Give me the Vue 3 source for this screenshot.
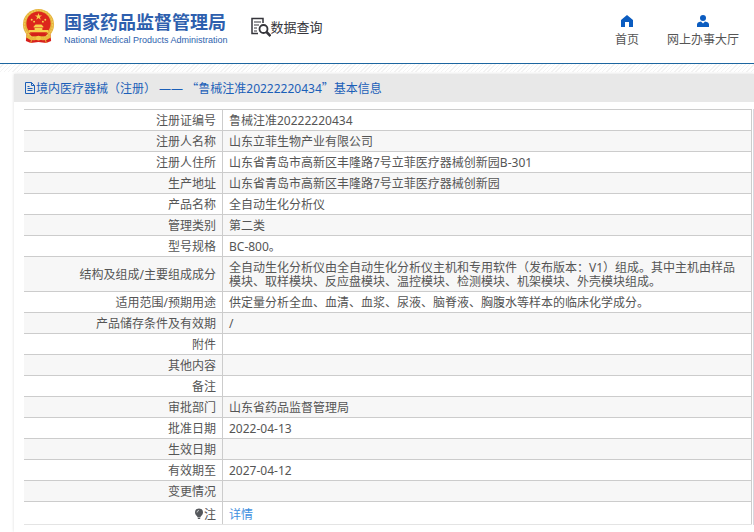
<script setup>
const rows = [
  ['注册证编号', '鲁械注准20222220434'],
  ['注册人名称', '山东立菲生物产业有限公司'],
  ['注册人住所', '山东省青岛市高新区丰隆路7号立菲医疗器械创新园B-301'],
  ['生产地址', '山东省青岛市高新区丰隆路7号立菲医疗器械创新园'],
  ['产品名称', '全自动生化分析仪'],
  ['管理类别', '第二类'],
  ['型号规格', 'BC-800。'],
  ['结构及组成/主要组成成分', '全自动生化分析仪由全自动生化分析仪主机和专用软件（发布版本：V1）组成。其中主机由样品模块、取样模块、反应盘模块、温控模块、检测模块、机架模块、外壳模块组成。'],
  ['适用范围/预期用途', '供定量分析全血、血清、血浆、尿液、脑脊液、胸腹水等样本的临床化学成分。'],
  ['产品储存条件及有效期', '/'],
  ['附件', ''],
  ['其他内容', ''],
  ['备注', ''],
  ['审批部门', '山东省药品监督管理局'],
  ['批准日期', '2022-04-13'],
  ['生效日期', ''],
  ['有效期至', '2027-04-12'],
  ['变更情况', '']
]
</script>

<template>
  <div class="page">
    <header class="header">
      <a class="brand" href="#">
        <svg class="emblem" viewBox="0 0 34 36" aria-hidden="true">
          <path d="M5 23 4 33l5 2 8-1 8 1 5-2-1-10z" fill="#d8201c" />
          <circle cx="17" cy="16" r="16" fill="#e5b23a" />
          <circle cx="17" cy="16" r="14.500" fill="none" stroke="#f0c858" stroke-width="1.500" stroke-dasharray="2 1" />
          <circle cx="17" cy="15" r="12.500" fill="#dc251c" />
          <path d="m17 4 .9 2.700h2.800l-2.300 1.600.9 2.700-2.300-1.700-2.300 1.700.9-2.700-2.300-1.600h2.800z" fill="#f7d04c" />
          <g fill="#f7d04c">
            <circle cx="10" cy="11" r="1" /><circle cx="12.500" cy="13" r="1" />
            <circle cx="21.500" cy="13" r="1" /><circle cx="24" cy="11" r="1" />
            <path d="M12 18l2-2h6l2 2v1H12zM13 19.500h8v2h6v2.500H7v-2.500h6z" />
          </g>
          <path d="M7 25h20l-3 3H10z" fill="#d3201a" />
          <path d="M5 26q5 5 9 3 3-2 6 0 4 2 9-3l1 3q-5 4-10 3-3-2-6 0-5 1-10-3z" fill="#e9b93b" />
          <circle cx="17" cy="30" r="2.500" fill="#f2c849" />
          <path d="m10 31-1 4m15-4 1 4" stroke="#e9b93b" stroke-width="1" />
        </svg>
        <span class="brand-text">
          <span class="brand-cn">国家药品监督管理局</span>
          <span class="brand-en">National Medical Products Administration</span>
        </span>
      </a>
      <div class="section">
        <svg class="query-icon" viewBox="0 0 20 20" fill="none" stroke="#35353b" aria-hidden="true">
          <path d="M12 6V1.500H1v15h6" stroke-width="1.500" />
          <path d="M3 5h7M3 8h5M3 11h3M3 14h3" stroke-width="1.200" />
          <circle cx="12.500" cy="12" r="4" stroke-width="1.800" />
          <path d="m15.500 15 4 4" stroke-width="2.500" />
        </svg>
        <span>数据查询</span>
      </div>
      <nav class="nav">
        <a href="#">
          <svg viewBox="0 0 14 12" aria-hidden="true"><path d="M7 0 1 5v7h4V7h4v5h4V5z" fill="#0b5cc0" /></svg>
          <span>首页</span>
        </a>
        <a href="#">
          <svg viewBox="0 0 14 12" aria-hidden="true"><circle cx="7" cy="3" r="3" fill="#0b5cc0" /><path d="M1 12V9.500Q1 7 5 6.500l2 2 2-2q4 .5 4 3V12z" fill="#0b5cc0" /></svg>
          <span>网上办事大厅</span>
        </a>
      </nav>
    </header>

    <main class="content">
      <section class="panel">
        <h1 class="title">
          <svg class="doc-icon" viewBox="0 0 12 12" fill="none" stroke="#1b5fb8" aria-hidden="true">
            <path d="M1.500.5h6l3 3v8h-9zM7.500.5v3h3M3.500 4.500h2M3.500 6.500h5M3.500 8.500h5" />
          </svg>
          <span>境内医疗器械（注册） —— <span class="quote">“</span>鲁械注准20222220434<span class="quote">”</span>基本信息</span>
        </h1>
        <div class="body">
          <div class="frame">
            <table class="info">
              <tbody>
                <tr v-for="[label, value] in rows" :key="label">
                  <th scope="row">{{ label }}</th>
                  <td>{{ value }}</td>
                </tr>
                <tr class="note">
                  <th scope="row">
                    <svg class="bulb" viewBox="0 0 10 12" aria-hidden="true">
                      <path d="M5 .5a4 4 0 0 1 4 4C9 7 7 7.500 6.500 9h-3C3 7.500 1 7 1 4.500a4 4 0 0 1 4-4zM3.500 9.500h3l-.5 1.500H4z" fill="#55585c" />
                      <path d="M3 4.500q0-2 2-2" fill="none" stroke="#c8cacc" />
                    </svg>注
                  </th>
                  <td><a href="#">详情</a></td>
                </tr>
              </tbody>
            </table>
          </div>
        </div>
      </section>
    </main>
  </div>
</template>

<style>
body {
  margin: 0;
  background: #fff;
}
</style>

<style scoped>
.page {
  font-family: "Noto Sans", "Noto Sans CJK SC", sans-serif;
  font-size: 12px;
  color: #555;
}
a {
  color: inherit;
  text-decoration: none;
}
.quote {
  font-family: "Noto Sans CJK SC", sans-serif;
}
.header {
  display: flex;
  align-items: flex-start;
  height: 63px;
  padding: 0 15px 0 22px;
  border-bottom: 1px solid #1d66a0;
}
.brand {
  display: flex;
  gap: 9px;
  padding-top: 9px;
  color: #2e5fae;
}
.emblem {
  width: 33px;
  height: 35px;
}
.brand-text {
  display: flex;
  flex-direction: column;
}
.brand-cn {
  font-size: 18px;
  line-height: 26px;
  font-weight: 700;
}
.brand-en {
  font-family: "Liberation Sans", sans-serif;
  font-size: 9px;
  line-height: 10px;
}
.section {
  display: flex;
  align-items: center;
  margin-left: 23px;
  padding-top: 17px;
  font-size: 13px;
  line-height: 20px;
  color: #35353b;
}
.query-icon {
  width: 20px;
  height: 20px;
}
.nav {
  display: flex;
  gap: 28px;
  margin-left: auto;
  padding-top: 15px;
}
.nav a {
  display: flex;
  flex-direction: column;
  align-items: center;
  gap: 4px;
  line-height: 18px;
}
.nav svg {
  width: 14px;
  height: 12px;
}
.content {
  padding: 10px 0 0 14px;
  background: repeating-linear-gradient(135deg, #fff 0 2px, #f3f3f3 2px 3px) top / 100% 8px no-repeat;
}
.panel {
  box-shadow: 0 0 3px #ddd;
}
.title {
  display: flex;
  align-items: center;
  margin: 0;
  padding: 0 10px;
  height: 28px;
  background: #e8e8e8;
  color: #1b5fb8;
  font-size: 12px;
  line-height: 18px;
  font-weight: 400;
}
.doc-icon {
  width: 12px;
  height: 12px;
}
.body {
  padding: 7px 0 7px 10px;
}
.frame {
  padding-right: 1px;
  border-right: 1px solid #d8d8e0;
}
.info {
  width: 100%;
  border-collapse: collapse;
  border-right: 1px solid #ccc;
}
.info th,
.info td {
  border-top: 1px solid #ccc;
  padding: 4px 6px 2px;
  height: 14px;
  line-height: 14px;
  font-weight: 400;
}
.info th {
  width: 186px;
  border-right: 1px solid #ccc;
  text-align: right;
}
.info td {
  text-align: left;
}
.info tr:nth-child(even) {
  background: #f7f7f7;
}
.info .note th,
.info .note td {
  padding: 6px 6px 2px;
  border-bottom: 1px solid #e4e4e4;
}
.note a {
  color: #3f8fe0;
}
.bulb {
  width: 10px;
  height: 12px;
  vertical-align: -1px;
}
</style>
